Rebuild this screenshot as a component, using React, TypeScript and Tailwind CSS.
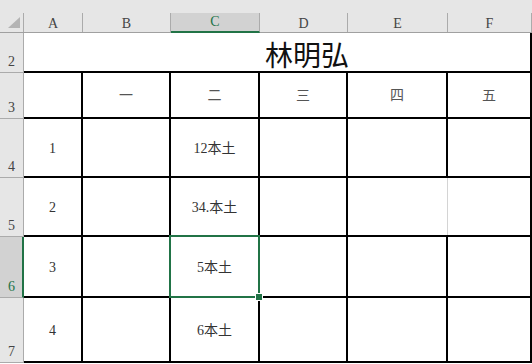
import React from "react";

const cols = [
  { id: "A", w: "w-[59px]" },
  { id: "B", w: "w-[88px]" },
  { id: "C", w: "w-[89px]" },
  { id: "D", w: "w-[88px]" },
  { id: "E", w: "w-[100px]" },
  { id: "F", w: "w-[84px]" },
];

type Row = { n: number; h: string; cells: string[] };

const rows: Row[] = [
  { n: 3, h: "h-[46px]", cells: ["", "一", "二", "三", "四", "五"] },
  { n: 4, h: "h-[59px]", cells: ["1", "", "12本土", "", "", ""] },
  { n: 5, h: "h-[59px]", cells: ["2", "", "34.本土", "", "", ""] },
  { n: 6, h: "h-[61px]", cells: ["3", "", "5本土", "", "", ""] },
  { n: 7, h: "h-[65px]", cells: ["4", "", "6本土", "", "", ""] },
];

const cellFont = { fontFamily: '"Liberation Serif", "Noto Sans CJK TC", serif' };

export default function App() {
  return (
    <div
      className="relative w-[532px] h-[364px] overflow-hidden bg-white"
      style={cellFont}
    >
      {/* top band */}
      <div className="h-[13px] bg-[#e6e6e6]" />
      {/* column header row */}
      <div className="flex h-[20px] bg-[#e6e6e6] border-b border-[#a0a0a0]">
        <div className="relative w-[24px] h-full border-r border-[#ababab]">
          <div className="absolute left-[8px] top-[4px] w-0 h-0 border-l-[12px] border-l-transparent border-b-[11px] border-b-[#b4b4b4]" />
        </div>
        {cols.map((c) =>
          c.id === "C" ? (
            <div
              key={c.id}
              className={`${c.w} h-[20px] -mb-[1px] bg-[#d2d2d2] border-r border-[#ababab] border-b-2 border-b-[#217346] flex items-center justify-center text-[14px] leading-none text-[#217346]`}
            >
              <span className="pb-[1px]">{c.id}</span>
            </div>
          ) : (
            <div
              key={c.id}
              className={`${c.w} h-full border-r border-[#ababab] flex items-center justify-center text-[14px] leading-none text-[#444444]`}
            >
              <span className="pt-[2px]">{c.id}</span>
            </div>
          )
        )}
      </div>

      {/* row 2 - merged title */}
      <div className="flex h-[40px]">
        <div className="w-[24px] h-full bg-[#e6e6e6] border-r border-b border-[#ababab] flex items-end justify-center pb-[3px] text-[14px] leading-none text-[#444444]">
          2
        </div>
        <div
          className="w-[508px] h-full border-r-2 border-b-2 border-black flex items-end pl-[241px] pb-[3px] text-[28px] leading-none text-[#111111]"
          style={{ fontFamily: '"Noto Sans CJK TC", sans-serif' }}
        >
          林明弘
        </div>
      </div>

      {rows.map((r) => (
        <div key={r.n} className={`flex ${r.h}`}>
          {r.n === 6 ? (
            <div className="w-[24px] h-full bg-[#d2d2d2] border-r-2 border-r-[#217346] border-b border-b-[#ababab] flex items-end justify-center pb-[3px] pl-[1px] text-[14px] leading-none text-[#217346]">
              {r.n}
            </div>
          ) : (
            <div className="w-[24px] h-full bg-[#e6e6e6] border-r border-b border-[#ababab] flex items-end justify-center pb-[3px] text-[14px] leading-none text-[#444444]">
              {r.n}
            </div>
          )}
          {cols.map((c, i) => {
            const grayRight = r.n === 5 && c.id === "E";
            return (
              <div
                key={c.id}
                className={`${c.w} h-full border-b-2 border-black flex items-center justify-center pt-[2px] text-[14px] leading-none ${
                  r.n === 3 ? "text-[#555555]" : "text-[#333333]"
                } ${
                  grayRight
                    ? "shadow-[inset_-1px_0_0_#d4d4d4]"
                    : "border-r-2"
                }`}
              >
                {r.cells[i]}
              </div>
            );
          })}
        </div>
      ))}

      {/* selection overlay on C6 */}
      <div className="absolute left-[169px] top-[235px] w-[91px] h-[63px] border-2 border-[#217346]" />
      <div className="absolute left-[255px] top-[293px] w-[8px] h-[8px] bg-[#217346] border border-white" />
    </div>
  );
}
